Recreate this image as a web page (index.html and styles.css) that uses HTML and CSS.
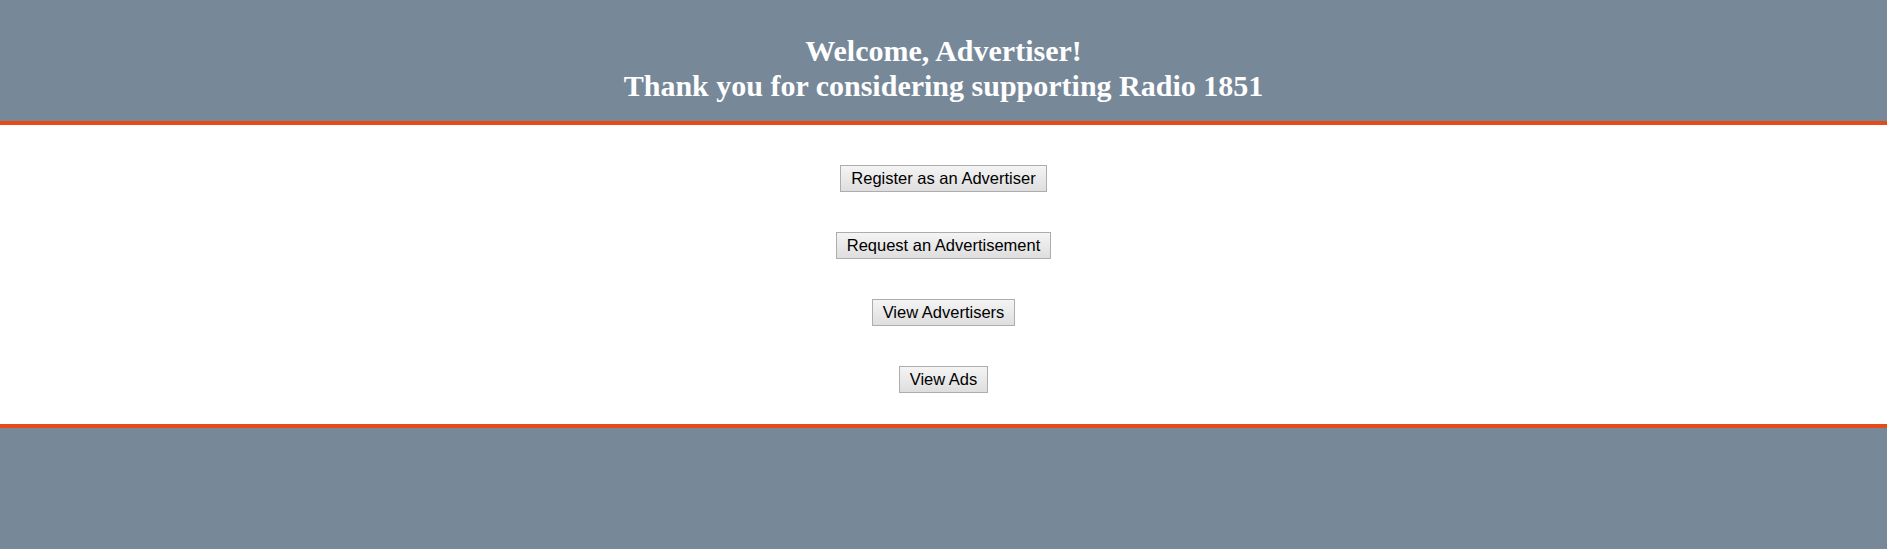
FILE: index.html
```html
<!DOCTYPE html>
<html>
<head>
<meta charset="utf-8">
<link rel="stylesheet" href="styles.css">
</head>
<body>
<header class="top">
  <h1 class="title">Welcome, Advertiser!<br>Thank you for considering supporting Radio 1851</h1>
</header>
<main class="actions">
  <button class="btn">Register as an Advertiser</button>
  <button class="btn">Request an Advertisement</button>
  <button class="btn">View Advertisers</button>
  <button class="btn">View Ads</button>
</main>
<footer class="bottom"></footer>
</body>
</html>
```

FILE: styles.css
```css
html, body {
  margin: 0;
  padding: 0;
}
body {
  background: #778899;
  font-family: "Liberation Serif", "Times New Roman", serif;
  height: 549px;
  overflow: hidden;
}
.top {
  background: #778899;
  height: 125px;
  box-sizing: border-box;
  padding-top: 14px;
  border-bottom: 4px solid #e64a19;
  display: flex;
  align-items: center;
  justify-content: center;
}
.title {
  margin: 0;
  color: #ffffff;
  font-size: 30px;
  line-height: 35px;
  font-weight: bold;
  text-align: center;
}
.actions {
  background: #ffffff;
  display: flex;
  flex-direction: column;
  align-items: center;
  gap: 40px;
  padding: 40px 0 31px;
  border-bottom: 4px solid #e64a19;
}
.btn {
  font-family: "Liberation Sans", Arial, sans-serif;
  font-size: 16.5px;
  line-height: 19px;
  padding: 3px 10px;
  color: #000;
  border: 1px solid #adadad;
  border-radius: 0;
  background: linear-gradient(#f4f4f4, #dedede);
  margin: 0;
}
.bottom {
  height: 120px;
}
```
